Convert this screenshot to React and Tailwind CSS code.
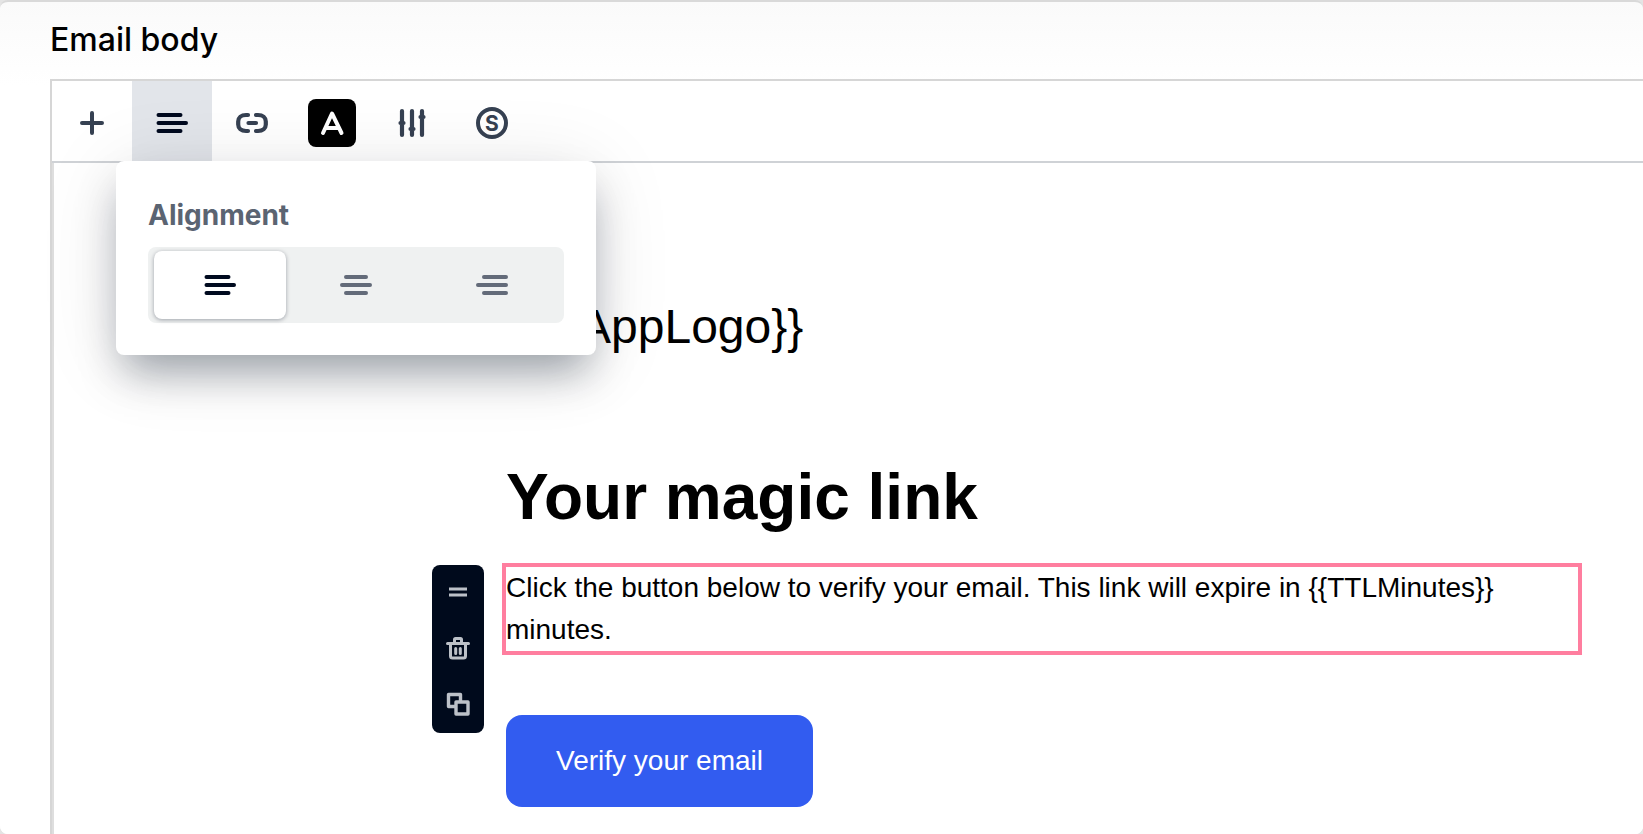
import React, { useState } from "react";

function Icon({ size = 32, width = 4, className = "", children }) {
  return (
    <svg
      width={size}
      height={size}
      viewBox={`0 0 ${size} ${size}`}
      fill="none"
      stroke="currentColor"
      strokeWidth={width}
      strokeLinecap="round"
      strokeLinejoin="round"
      aria-hidden="true"
      className={className}
    >
      {children}
    </svg>
  );
}

const AlignLeft = () => (
  <Icon>
    <path d="M2.5 8h22M2.5 16h27.5M2.5 24h22" />
  </Icon>
);
const AlignCenter = () => (
  <Icon>
    <path d="M6 8h20M2 16h28M6 24h20" />
  </Icon>
);
const AlignRight = () => (
  <Icon>
    <path d="M8 8h22M2 16h28M8 24h22" />
  </Icon>
);
const Plus = () => (
  <Icon>
    <path d="M6 16h20M16 6v20" />
  </Icon>
);
const LinkIcon = () => (
  <Icon width={4.2}>
    <path d="M12 8H10C5.200 8 2.200 10.800 2.200 14.500v3C2.200 21.200 5.200 24 10 24H12M20 8h2c4.800 0 7.800 2.800 7.800 6.500v3c0 3.700-3 6.500-7.800 6.500H20M12.500 16h7.500" />
  </Icon>
);
const TextColor = () => (
  <Icon width={4}>
    <path d="M7 26 16 6.500l9.500 19.500M10.500 21h11" />
  </Icon>
);
const Sliders = () => (
  <Icon width={4.2}>
    <path d="M6 4v24M16 4v24M26 4v24M4.500 16h3M14.500 22h3M24.500 10h3" />
  </Icon>
);
const Variable = () => (
  <Icon>
    <circle cx="16" cy="16" r="14" />
    <text
      x="16"
      y="23.500"
      textAnchor="middle"
      fill="currentColor"
      stroke="none"
      className="font-['Inter',sans-serif] text-[21px] font-bold"
    >
      S
    </text>
  </Icon>
);
const Handle = () => (
  <Icon size={24} width={3}>
    <path d="M3 9h18M3 15h18" strokeLinecap="butt" />
  </Icon>
);
const Trash = () => (
  <Icon size={24} width={3}>
    <path d="M1.500 7.500h21M4.500 7.500v12.500a2 2 0 0 0 2 2h11a2 2 0 0 0 2-2V7.500M8.500 7V3.500a1 1 0 0 1 1-1h5a1 1 0 0 1 1 1V7M9.700 12.500v5M14.300 12.500v5" />
  </Icon>
);
const Duplicate = () => (
  <Icon size={24} width={3.4}>
    <path d="M9 14.500H2.500v-12h12V9" />
    <rect x="10" y="10" width="12" height="12" />
  </Icon>
);

function ToolButton({ label, active, children, ...rest }) {
  return (
    <button
      type="button"
      aria-label={label}
      className={
        "flex size-20 items-center justify-center pt-1 " +
        (active ? "bg-[#e2e5ea] text-[#000a1f]" : "text-[#364152]")
      }
      {...rest}
    >
      {children}
    </button>
  );
}

const alignments = [
  ["left", AlignLeft],
  ["center", AlignCenter],
  ["right", AlignRight],
];

function AlignmentMenu() {
  const [value, setValue] = useState("left");
  return (
    <div className="absolute left-16 top-20 z-10 w-[480px] rounded-lg bg-white p-8 shadow-[0_24px_40px_-8px_rgba(0,18,32,0.36),0_8px_80px_rgba(0,18,32,0.1)]">
      <h2 className="font-['Inter',sans-serif] text-[28px] leading-11 font-bold text-[#5b6472]">
        Alignment
      </h2>
      <div className="mt-2.5 grid h-[76px] grid-cols-3 gap-1 rounded-lg bg-[#eff1f1] px-1.5 py-1">
        {alignments.map(([name, Glyph]) => (
          <button
            key={name}
            type="button"
            aria-label={`Align ${name}`}
            aria-pressed={value === name}
            onClick={() => setValue(name)}
            className={
              "flex items-center justify-center rounded-lg " +
              (value === name
                ? "bg-white text-[#000a1f] shadow-[0_1px_4px_rgba(0,12,32,0.35)]"
                : "text-[#636b79]")
            }
          >
            <Glyph />
          </button>
        ))}
      </div>
    </div>
  );
}

function Toolbar() {
  const [open, setOpen] = useState(true);
  return (
    <div className="relative flex border-b-2 border-[#cfd2d6]" role="toolbar">
      <ToolButton label="Insert block">
        <Plus />
      </ToolButton>
      <ToolButton
        label="Alignment"
        active
        aria-expanded={open}
        onClick={() => setOpen(!open)}
      >
        <AlignLeft />
      </ToolButton>
      <ToolButton label="Link">
        <LinkIcon />
      </ToolButton>
      <ToolButton label="Text color">
        <span className="flex size-12 items-center justify-center rounded-lg bg-black text-white">
          <TextColor />
        </span>
      </ToolButton>
      <ToolButton label="Settings">
        <Sliders />
      </ToolButton>
      <ToolButton label="Variables">
        <Variable />
      </ToolButton>
      {open && <AlignmentMenu />}
    </div>
  );
}

function BlockActions() {
  return (
    <div className="absolute top-0.5 right-full mr-[18px] flex w-[52px] flex-col items-center gap-8 rounded-lg bg-[#000a1c] pt-[15px] pb-[17px] text-[#bcc1c8]">
      <button type="button" aria-label="Move block">
        <Handle />
      </button>
      <button type="button" aria-label="Delete block">
        <Trash />
      </button>
      <button type="button" aria-label="Duplicate block">
        <Duplicate />
      </button>
    </div>
  );
}

export default function App() {
  return (
    <div className="min-h-screen bg-[#e4e4e4]">
      <main className="flex min-h-screen flex-col overflow-hidden rounded-lg border-t-2 border-[#d9d9d9] bg-white bg-linear-to-b from-[#fafafa] to-white to-10% pl-[50px]">
        <h1 className="pt-3.5 pb-[15px] font-['Inter',sans-serif] text-[32px] leading-12 font-medium text-black">
          Email body
        </h1>
        <section className="flex grow flex-col border-t-2 border-l-2 border-[#d6d6d6] bg-white">
          <Toolbar />
          <div className="grow border-l-2 border-[#dedede] pr-[61px] pl-[448px] font-['Liberation_Sans',Arial,sans-serif] text-black">
            <p className="pt-32 pl-[45px] text-[48px] leading-[72px]">{"{{AppLogo}}"}</p>
            <h2 className="pt-24 pl-1 text-[64px] leading-[76px] font-bold">
              Your magic link
            </h2>
            <div className="relative mt-7">
              <BlockActions />
              <p className="border-4 border-[#ff7e9f] text-[28px] leading-[42px]">
                Click the button below to verify your email. This link will
                expire in {"{{TTLMinutes}}"} minutes.
              </p>
            </div>
            <a
              href="#verify"
              className="mt-15 ml-1 inline-block rounded-2xl bg-[#325cf0] px-[50px] py-[25px] text-[28px] leading-[42px] text-white"
            >
              Verify your email
            </a>
          </div>
        </section>
      </main>
    </div>
  );
}
